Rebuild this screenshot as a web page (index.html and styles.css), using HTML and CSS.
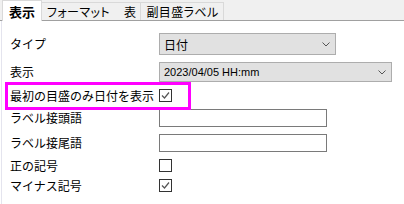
FILE: index.html
```html
<!DOCTYPE html>
<html lang="ja">
<head>
    <meta charset="UTF-8">
    <title>表示</title>
    <link rel="stylesheet" href="styles.css">
</head>
<body>

    <div class="tabs">
        <div class="tab active">表示</div>
        <div class="tab joined">フォーマット</div>
        <div class="tab">表</div>
        <div class="tab">副目盛ラベル</div>
    </div>

    <div class="panel">
        <div class="form">
            <div class="label">タイプ</div>
            <div class="select short">
                <span>日付</span>
                <svg class="chev" width="8" height="5" viewBox="0 0 8 5"><path d="M0.5 0.5 L4 4 L7.5 0.5" fill="none" stroke="#555" stroke-width="1"/></svg>
            </div>

            <div class="label">表示</div>
            <div class="select long">
                <span class="mono">2023/04/05 HH:mm</span>
                <svg class="chev" width="8" height="5" viewBox="0 0 8 5"><path d="M0.5 0.5 L4 4 L7.5 0.5" fill="none" stroke="#555" stroke-width="1"/></svg>
            </div>

            <div class="label">最初の目盛のみ日付を表示</div>
            <div class="check on">
                <svg width="11" height="11" viewBox="0 0 11 11"><path d="M2 5.5 L4.5 8 L9 2.5" fill="none" stroke="#555" stroke-width="1.2"/></svg>
            </div>

            <div class="label">ラベル接頭語</div>
            <div class="input"></div>

            <div class="label">ラベル接尾語</div>
            <div class="input"></div>

            <div class="label">正の記号</div>
            <div class="check"></div>

            <div class="label">マイナス記号</div>
            <div class="check on">
                <svg width="11" height="11" viewBox="0 0 11 11"><path d="M2 5.5 L4.5 8 L9 2.5" fill="none" stroke="#555" stroke-width="1.2"/></svg>
            </div>
        </div>

        <!-- highlight around the date option -->
        <div class="mark"></div>
    </div>

</body>
</html>
```

FILE: styles.css
```css
* {
    box-sizing: border-box;
}

body {
    margin: 0;
    width: 404px;
    height: 204px;
    background: #fff;
    font-family: "Noto Sans CJK JP", "Noto Sans", sans-serif;
    font-size: 12px;
    color: #000;
    overflow: hidden;
}

/* tab strip */
.tabs {
    display: flex;
    align-items: flex-end;
    height: 21px;
    padding-left: 2px;
    background: #f0f0f0;
    border-bottom: 1px solid #a0a0a0;
    font-feature-settings: "palt";
}

.tab {
    height: 18px;
    line-height: 17px;
    padding: 0 4px 0 5px;
    border: 1px solid #d9d9d9;
    border-bottom: none;
    border-left: none;
    background: #f0f0f0;
    letter-spacing: 0.4px;
}

.tab.joined {
    border-right: none;
    padding-right: 9px;
}

.tab.active {
    height: 21px;
    margin-bottom: -1px;
    padding: 0 6px 0 6px;
    line-height: 21px;
    background: #fff;
    border: 1px solid #d9d9d9;
    border-bottom: none;
    font-weight: bold;
    font-size: 13px;
    letter-spacing: 0;
}

.panel {
    position: relative;
    height: 183px;
    border-left: 1px solid #e4e4ee;
    margin-left: 1px;
}

.form {
    display: grid;
    grid-template-columns: 149px auto;
    grid-template-rows: 22px 20px 13px 18px 18px 13px 13px;
    row-gap: 7px;
    align-items: center;
    justify-items: start;
    padding: 12px 0 0 8px;
}

.label {
    white-space: nowrap;
    line-height: 14px;
}

.select {
    display: flex;
    align-items: center;
    justify-content: space-between;
    height: 100%;
    padding: 0 5px 0 4px;
    background: #e1e1e1;
    border: 1px solid #adadad;
}

.select.short {
    width: 177px;
}

.select.long {
    width: 233px;
}

.mono {
    font-family: "Liberation Sans", sans-serif;
    font-size: 11px;
}

.chev {
    margin-top: 1px;
}

.input {
    width: 168px;
    height: 18px;
    border: 1px solid #7a7a7a;
    background: #fff;
}

.check {
    display: flex;
    align-items: center;
    justify-content: center;
    width: 13px;
    height: 13px;
    border: 1px solid #333;
    background: #fff;
}

.mark {
    position: absolute;
    left: 3px;
    top: 61px;
    width: 186px;
    height: 28px;
    border: 3px solid #ff00ff;
}
```
